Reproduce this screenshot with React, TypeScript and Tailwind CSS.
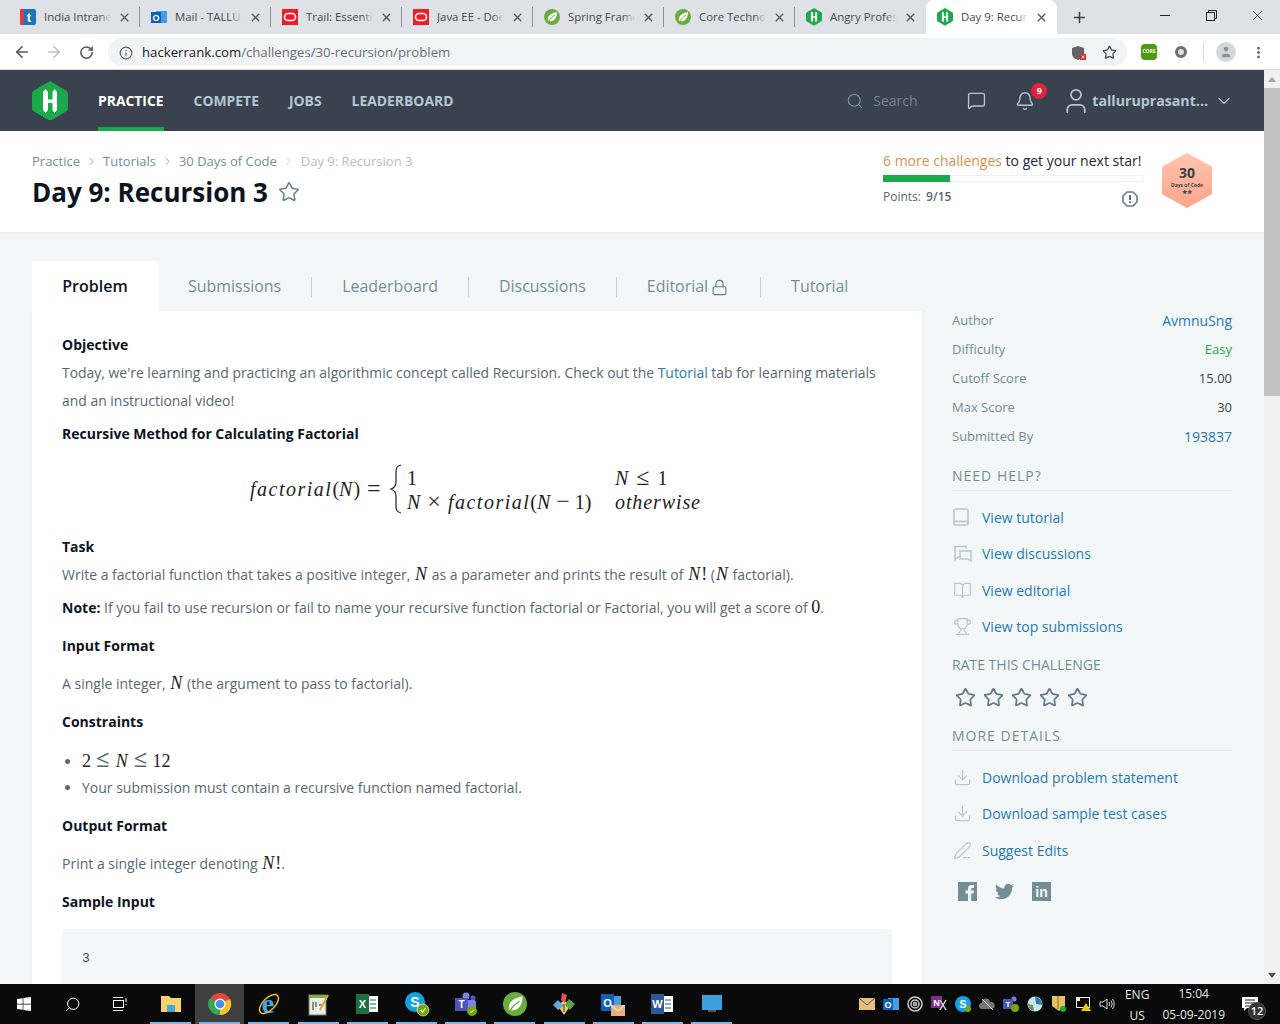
import {
  ArrowLeft,
  ArrowRight,
  Bell,
  BookOpen,
  ChevronDown,
  ChevronRight,
  Download,
  Info,
  Lock,
  MessageSquare,
  MoreVertical,
  PenLine,
  Plus,
  RotateCw,
  Search,
  Star,
  Trophy,
  User,
  X,
} from 'lucide-react';
import { FaTwitter, FaWindows } from 'react-icons/fa';
import type { ReactNode } from 'react';

function HrHex({ size = 16 }: { size?: number }) {
  return (
    <svg width={size} height={size * 1.11} viewBox="0 0 36 40" className="shrink-0">
      <path d="M18 0 L34 9.5 Q36 10.5 36 13 V27 Q36 29.5 34 30.5 L18 40 L2 30.5 Q0 29.5 0 27 V13 Q0 10.5 2 9.5 Z" fill="#1ba94c" />
      <path d="M13.5 8 L16 11 V18.5 H20.5 V11 L22.5 8 L25 11 V29 L22.5 32 L20.5 29 V22 H16 V29 L13.5 32 L11 29 V11 Z" fill="#fff" />
    </svg>
  );
}

function SpringLeaf({ size = 16 }: { size?: number }) {
  return (
    <svg width={size} height={size} viewBox="0 0 16 16" className="shrink-0">
      <circle cx="8" cy="8" r="8" fill="#6aad3d" />
      <path d="M4 12 C3 7 7 4 13 3 C13 9 10 13 5 12 Z" fill="#fff" />
      <path d="M4 13 C6 10 8 8 11 6" stroke="#6aad3d" fill="none" />
    </svg>
  );
}

function OracleIcon() {
  return (
    <svg width="16" height="16" viewBox="0 0 16 16" className="shrink-0">
      <rect width="16" height="16" fill="#ee1c25" />
      <rect x="2.5" y="4.5" width="11" height="7" rx="3.5" fill="none" stroke="#fff" strokeWidth="1.6" />
    </svg>
  );
}

function TeleIcon() {
  return (
    <svg width="16" height="16" viewBox="0 0 16 16" className="shrink-0">
      <rect width="16" height="16" rx="2" fill="#1b76bb" />
      <rect width="4" height="16" rx="1" fill="#e4344f" />
      <text x="9" y="13" fontSize="13" fontWeight="700" textAnchor="middle" fill="#fff" fontFamily="Liberation Sans">t</text>
    </svg>
  );
}

function OutlookIcon({ size = 16 }: { size?: number }) {
  return (
    <svg width={size} height={size} viewBox="0 0 16 16" className="shrink-0">
      <rect x="5" y="2" width="11" height="12" fill="#3fa0e6" />
      <rect x="0" y="3" width="10" height="11" fill="#0f5fb5" />
      <text x="5" y="12" fontSize="9" fontWeight="700" textAnchor="middle" fill="#fff" fontFamily="Liberation Sans">O</text>
    </svg>
  );
}

const tabs: { title: string; icon: ReactNode; active?: boolean }[] = [
  { title: 'India Intranet', icon: <TeleIcon /> },
  { title: 'Mail - TALLURU', icon: <OutlookIcon /> },
  { title: 'Trail: Essentials', icon: <OracleIcon /> },
  { title: 'Java EE - Docs', icon: <OracleIcon /> },
  { title: 'Spring Framework', icon: <SpringLeaf /> },
  { title: 'Core Technologies', icon: <SpringLeaf /> },
  { title: 'Angry Professor', icon: <HrHex size={16} /> },
  { title: 'Day 9: Recursion', icon: <HrHex size={16} />, active: true },
];

function TabStrip() {
  return (
    <div className="flex h-[34px] items-stretch bg-[#dee1e6] pl-[9px] font-['Open_Sans',sans-serif] text-[11.4px]">
      {tabs.map((tab, i) => (
        <div
          key={tab.title}
          className={
            tab.active
              ? 'flex w-[131px] items-center rounded-t-lg bg-white pl-[11px]'
              : 'flex w-[131px] items-center pl-[11px]'
          }
        >
          {tab.icon}
          <div className="relative ml-[8px] w-[67px] shrink-0 overflow-hidden whitespace-nowrap text-[#45494d]">
            {tab.title}
            <div
              className={
                tab.active
                  ? 'absolute inset-y-0 right-0 w-3 bg-gradient-to-r from-transparent to-white'
                  : 'absolute inset-y-0 right-0 w-3 bg-gradient-to-r from-transparent to-[#dee1e6]'
              }
            />
          </div>
          <X size={13} strokeWidth={2.5} className="ml-[7px] shrink-0 text-[#55585c]" />
          {i < 6 && <div className="ml-auto h-[20px] w-px shrink-0 bg-[#8f9296]" />}
        </div>
      ))}
      <div className="ml-[14px] flex items-center">
        <Plus size={17} strokeWidth={2.2} className="text-[#3c4043]" />
      </div>
      <div className="ml-auto flex items-start">
        <div className="flex h-[30px] w-[46px] items-center justify-center">
          <div className="h-px w-[10px] bg-[#222]" />
        </div>
        <div className="flex h-[30px] w-[46px] items-center justify-center">
          <svg width="11" height="11" viewBox="0 0 11 11" fill="none" stroke="#222">
            <rect x="0.5" y="2.5" width="8" height="8" />
            <path d="M2.5 2.5 V0.5 H10.5 V8.5 H8.5" />
          </svg>
        </div>
        <div className="flex h-[30px] w-[46px] items-center justify-center">
          <X size={17} strokeWidth={1} className="text-[#222]" />
        </div>
      </div>
    </div>
  );
}

function Toolbar() {
  return (
    <div className="flex h-[36px] items-center border-b border-[#dadce0] bg-white pt-px font-['Open_Sans',sans-serif]">
      <div className="flex w-[108px] items-center pl-[13px] text-[#55585c]">
        <ArrowLeft size={18} strokeWidth={2.2} />
        <ArrowRight size={18} strokeWidth={2.2} className="ml-[14px] text-[#bdc1c6]" />
        <RotateCw size={15} strokeWidth={2.4} className="ml-[16px]" />
      </div>
      <div className="flex h-[28px] w-[1019px] items-center rounded-full bg-[#f1f3f4] pl-[11px] pr-[10px] pt-px text-[13.2px]">
        <Info size={14} className="text-[#5f6368]" />
        <span className="ml-[9px] text-[#202124]">hackerrank.com</span>
        <span className="text-[#6a7075]">/challenges/30-recursion/problem</span>
        <div className="ml-auto flex items-center gap-[15px]">
          <svg width="15" height="16" viewBox="0 0 15 16">
            <path d="M6 1 L12 3 V8 C12 12 9 14 6 15 C3 14 0 12 0 8 V3 Z" fill="#5f6368" />
            <rect x="8" y="9" width="6" height="6" fill="#d93025" />
            <path d="M9.5 10.5 L12.5 13.5 M12.5 10.5 L9.5 13.5" stroke="#fff" strokeWidth="0.8" />
          </svg>
          <Star size={15} strokeWidth={2} className="text-[#45494d]" />
        </div>
      </div>
      <div className="ml-[14px] flex h-[16px] w-[16px] items-center justify-center rounded-sm bg-[#4f9a0f]">
        <span className="text-[5px] font-bold text-white">CORS</span>
      </div>
      <div className="ml-[18px] h-[12px] w-[12px] rounded-full border-[3px] border-[#6e6e6e] bg-[#ddd]" />
      <div className="ml-[16px] h-[18px] w-px bg-[#dadce0]" />
      <div className="ml-[12px] flex h-[20px] w-[20px] items-center justify-center rounded-full bg-[#d5d7da]">
        <User size={14} fill="#8f9296" strokeWidth={0} />
      </div>
      <MoreVertical size={15} strokeWidth={2.5} className="ml-[15px] text-[#5f6368]" />
    </div>
  );
}

function NavBar() {
  const items = ['PRACTICE', 'COMPETE', 'JOBS', 'LEADERBOARD'];
  return (
    <div className="flex h-[61px] items-stretch bg-[#39424e] pl-8 pr-[30px] text-[13.9px] font-bold text-[#b3c7d2]">
      <div className="flex items-center">
        <HrHex size={36} />
      </div>
      <div className="ml-[30px] flex items-stretch gap-[30px]">
        {items.map((item, i) => (
          <div
            key={item}
            className={
              i === 0
                ? 'flex items-center border-b-4 border-[#1ba94c] pt-[5px] text-white'
                : 'flex items-center border-b-4 border-transparent pt-[5px]'
            }
          >
            {item}
          </div>
        ))}
      </div>
      <div className="ml-auto flex items-center font-normal">
        <Search size={18} strokeWidth={1.4} className="text-[#7f9aa5]" />
        <span className="ml-[9px] w-[94px] text-[14px] text-[#6f8791]">Search</span>
        <MessageSquare size={19} strokeWidth={1.7} />
        <div className="relative ml-[29px] flex">
          <Bell size={20} strokeWidth={1.7} />
          <div className="absolute -top-[8px] left-[16px] flex h-[16px] w-[16px] items-center justify-center rounded-full bg-[#e0243e] text-[9px] font-bold text-white">
            9
          </div>
        </div>
        <User size={30} strokeWidth={1.4} className="ml-[26px]" />
        <span className="ml-px text-[14.2px] font-bold">talluruprasant...</span>
        <ChevronDown size={20} strokeWidth={1.3} className="ml-[6px]" />
      </div>
    </div>
  );
}

function PageHeader() {
  return (
    <div className="flex h-[101px] bg-white pl-8 pr-[52px] shadow-[0_1px_3px_rgba(0,0,0,0.05)]">
      <div>
        <div className="mt-[21px] flex items-center text-[13px] leading-[18px] text-[#738f93]">
          <span>Practice</span>
          <ChevronRight size={13} strokeWidth={1.4} className="mx-[5px]" />
          <span>Tutorials</span>
          <ChevronRight size={13} strokeWidth={1.4} className="mx-[5px]" />
          <span>30 Days of Code</span>
          <ChevronRight size={13} strokeWidth={1.4} className="ml-[5px] mr-[6px] text-[#b4c2c5]" />
          <span className="text-[#b0bfc2]">Day 9: Recursion 3</span>
        </div>
        <div className="mt-[3px] flex items-center">
          <h1 className="text-[26px] font-bold leading-[38px] text-[#0e141e]">Day 9: Recursion 3</h1>
          <Star size={22} strokeWidth={1.6} className="ml-[10px] text-[#5f7d8c]" />
        </div>
      </div>
      <div className="ml-auto flex">
        <div className="mt-[20px] w-[260px]">
          <div className="text-[14px] leading-[20px] text-[#1c2733]">
            <span className="text-[#d8914f]">6 more challenges</span> to get your next star!
          </div>
          <div className="mt-[4px] h-[7px] border border-[#f0f0f0]">
            <div className="-m-px h-[7px] w-[67px] bg-[#1ba94c]" />
          </div>
          <div className="mt-[5px] flex items-center justify-between pr-[5px] text-[12px] text-[#576871]">
            <span>
              Points: <b className="ml-[2px] font-semibold">9/15</b>
            </span>
            <svg width="16" height="16" viewBox="0 0 16 16" className="mt-[4px]" fill="none">
              <path d="M5 1 H11 L15 5 V11 L11 15 H5 L1 11 V5 Z" stroke="#5f7d8c" strokeWidth="1.6" strokeLinejoin="round" />
              <path d="M8 4 V9 M8 10.5 V12" stroke="#39424e" strokeWidth="1.6" />
            </svg>
          </div>
        </div>
        <div className="ml-[19px] mt-[22px] flex h-[55px] w-[50px] flex-col items-center justify-center bg-gradient-to-b from-[#ffc4ab] to-[#ffa58c] [clip-path:polygon(50%_0,100%_25%,100%_75%,50%_100%,0_75%,0_25%)]">
          <span className="text-[14px] font-bold leading-[16px] text-[#39424e]">30</span>
          <span className="text-[5px] font-bold leading-[8px] text-[#39424e]">Days of Code</span>
          <span className="text-[6px] font-bold leading-[7px] text-[#39424e]">★★</span>
        </div>
      </div>
    </div>
  );
}

function ProblemTabs() {
  const tabNames = ['Submissions', 'Leaderboard', 'Discussions', 'Editorial', 'Tutorial'];
  return (
    <div className="flex h-[50px] items-stretch text-[15.95px] text-[#738f93]">
      <div className="flex w-[127px] items-center justify-center bg-white pr-px text-[16px] font-semibold text-[#0e141e]">Problem</div>
      <div className="-ml-px flex items-stretch pt-[2px]">
        {tabNames.map((name, i) => (
          <div key={name} className="flex items-center">
            <div className={i < 4 ? 'flex h-[20px] items-center border-r border-[#c2d0d3] px-[30px]' : 'flex h-[20px] items-center px-[30px]'}>
              {name}
              {name === 'Editorial' && <Lock size={17} strokeWidth={1.6} className="ml-[3px] mr-[2px] text-[#5f7d8c]" />}
            </div>
          </div>
        ))}
      </div>
    </div>
  );
}

function M({ children }: { children: ReactNode }) {
  return <i className="ml-px mr-px font-['Liberation_Serif',serif] text-[18px] leading-none text-[#222]">{children}</i>;
}

function Mn({ children }: { children: ReactNode }) {
  return <span className="font-['Liberation_Serif',serif] text-[18px] leading-none text-[#222]">{children}</span>;
}

function Op({ children, className = 'mx-[5px]' }: { children: ReactNode; className?: string }) {
  return <span className={`${className} text-[24px] leading-none`}>{children}</span>;
}

function Heading({ children, className = 'mt-[10px]' }: { children: ReactNode; className?: string }) {
  return <h3 className={`${className} text-[14px] font-bold leading-7 text-[#0e141e]`}>{children}</h3>;
}

function Formula() {
  return (
    <div className="flex h-[85px] items-center pb-[4px] pl-[188px] font-['Liberation_Serif',serif] text-[20px] leading-[24px] text-[#222]">
      <span className="w-[133px] whitespace-nowrap">
        <i className="tracking-[1.5px]">factorial</i>(<i className="tracking-[1px]">N</i>)
        <Op className="ml-[7px]">=</Op>
      </span>
      <svg width="14" height="50" viewBox="0 0 14 50" fill="none" stroke="#222" strokeWidth="1.2" className="ml-[6px]">
        <path d="M12 1 C7 2 7 5 7 9 V18 C7 22 5 24 2 25 C5 26 7 28 7 32 V41 C7 45 7 48 12 49" />
      </svg>
      <div className="ml-[4px] grid grid-cols-[208px_auto] grid-rows-[24px_24px] items-baseline whitespace-nowrap">
        <span>1</span>
        <span>
          <i>N</i>
          <Op className="mx-[8px]">≤</Op>1
        </span>
        <span>
          <i>N</i>
          <Op className="mx-[7px]">×</Op>
          <i className="tracking-[1.5px]">factorial</i>(<i className="tracking-[1px]">N</i>
          <Op className="mx-[5px]">−</Op>1)
        </span>
        <i className="tracking-[0.9px]">otherwise</i>
      </div>
    </div>
  );
}

function ProblemCard() {
  return (
    <div className="h-[700px] bg-white px-[30px] pt-[20px] text-[14px] leading-7 text-[#576871] shadow-[0_1px_4px_rgba(0,0,0,0.08)]">
      <Heading className="">Objective</Heading>
      <p className="text-[13.95px]">
        Today, we're learning and practicing an algorithmic concept called Recursion. Check out the{' '}
        <span className="text-[#1f7ab8]">Tutorial</span> tab for learning materials and an instructional video!
      </p>
      <Heading className="mt-[5px]">Recursive Method for Calculating Factorial</Heading>
      <Formula />
      <Heading className="">Task</Heading>
      <p>
        Write a factorial function that takes a positive integer, <M>N</M> as a parameter and prints the result of{' '}
        <M>N</M>
        <Mn>!</Mn> (<M>N</M> factorial).
      </p>
      <p className="mt-[5px]">
        <b className="font-bold text-[#0e141e]">Note:</b> If you fail to use recursion or fail to name your recursive
        function factorial or Factorial, you will get a score of <Mn>0</Mn>.
      </p>
      <Heading>Input Format</Heading>
      <p className="mt-[10px]">
        A single integer, <M>N</M> (the argument to pass to factorial).
      </p>
      <Heading>Constraints</Heading>
      <ul className="mt-[10px] list-disc pl-5">
        <li className="h-7 leading-[26px]">
          <Mn>2</Mn>
          <Op>≤</Op>
          <M>N</M>
          <Op>≤</Op>
          <Mn>12</Mn>
        </li>
        <li>Your submission must contain a recursive function named factorial.</li>
      </ul>
      <Heading>Output Format</Heading>
      <p className="mt-[10px]">
        Print a single integer denoting <M>N</M>
        <Mn>!</Mn>.
      </p>
      <Heading>Sample Input</Heading>
      <div className="mt-[13px] h-[80px] bg-[#f3f7f7] px-5 pt-4 font-['Liberation_Mono',monospace] text-[13px] text-[#39424e]">3</div>
    </div>
  );
}

const stats = [
  { label: 'Author', value: 'AvmnuSng', color: 'text-[14px] text-[#1f7ab8]' },
  { label: 'Difficulty', value: 'Easy', color: 'text-[13px] text-[#1ba94c]' },
  { label: 'Cutoff Score', value: '15.00', color: 'text-[13px] text-[#39424e]' },
  { label: 'Max Score', value: '30', color: 'text-[13px] text-[#39424e]' },
  { label: 'Submitted By', value: '193837', color: 'text-[14px] text-[#1f7ab8]' },
];

function TwoChat() {
  return (
    <svg width="20" height="18" viewBox="0 0 20 18" fill="none" stroke="#b9c8cc" strokeWidth="1.5">
      <path d="M13 3 V1.5 H2 V15 L5 12 H7" />
      <path d="M7 6 H18 V16 L15 14 H7 Z" />
    </svg>
  );
}

function BookIcon() {
  return (
    <svg width="16" height="18" viewBox="0 0 16 18" fill="none" stroke="#b9c8cc" strokeWidth="1.6">
      <rect x="1" y="1" width="14" height="16" rx="1.5" />
      <path d="M1 13.5 H15" />
    </svg>
  );
}

function SquareLogo({ children }: { children: ReactNode }) {
  return (
    <svg width="19" height="19" viewBox="0 0 19 19" className="shrink-0">
      <rect width="19" height="19" fill="#738f93" />
      {children}
    </svg>
  );
}

function SideLink({ icon, label }: { icon: ReactNode; label: string }) {
  return (
    <div className="flex h-[36.5px] items-center">
      <div className="flex w-[30px] items-center pl-px text-[#b9c8cc]">{icon}</div>
      <span className="text-[14px] text-[#1f7ab8]">{label}</span>
    </div>
  );
}

function Sidebar() {
  return (
    <div className="w-[280px]">
      <div className="-mt-[5px] pt-[50px]">
        {stats.map((s) => (
          <div key={s.label} className="flex h-[29px] items-center justify-between text-[13px] text-[#738f93]">
            <span>{s.label}</span>
            <span className={s.color}>{s.value}</span>
          </div>
        ))}
      </div>
      <div className="mt-[15px] border-b border-[#e6ebec] pb-[4px] text-[14px] leading-[20px] tracking-[1px] text-[#738f93]">
        NEED HELP?
      </div>
      <div className="mt-[8px]">
        <SideLink icon={<BookIcon />} label="View tutorial" />
        <SideLink icon={<TwoChat />} label="View discussions" />
        <SideLink icon={<BookOpen size={19} strokeWidth={1.5} />} label="View editorial" />
        <SideLink icon={<Trophy size={19} strokeWidth={1.5} />} label="View top submissions" />
      </div>
      <div className="mt-[10px] text-[14px] leading-[20px] text-[#738f93]">RATE THIS CHALLENGE</div>
      <div className="mt-[12px] flex gap-[7px] pl-[3px] text-[#5f7d8c]">
        {[1, 2, 3, 4, 5].map((n) => (
          <Star key={n} size={21} strokeWidth={2} />
        ))}
      </div>
      <div className="mt-[18px] border-b border-[#e6ebec] pb-[4px] text-[14px] leading-[20px] tracking-[1px] text-[#738f93]">
        MORE DETAILS
      </div>
      <div className="mt-[8px]">
        <SideLink icon={<Download size={19} strokeWidth={1.5} />} label="Download problem statement" />
        <SideLink icon={<Download size={19} strokeWidth={1.5} />} label="Download sample test cases" />
        <SideLink icon={<PenLine size={19} strokeWidth={1.5} />} label="Suggest Edits" />
      </div>
      <div className="mt-[13px] flex items-center gap-[18px] pl-[6px] text-[#738f93]">
        <SquareLogo>
          <path d="M10 19 V11.5 H7.5 V8.5 H10 V6.5 C10 4 11.5 3 13.5 3 H16 V6 H14.5 C13.5 6 13.2 6.5 13.2 7.2 V8.5 H16 L15.5 11.5 H13.2 V19 Z" fill="#f3f7f7" />
        </SquareLogo>
        <FaTwitter size={19} />
        <SquareLogo>
          <text x="9.5" y="15" fontSize="14" fontWeight="700" textAnchor="middle" fill="#f3f7f7" fontFamily="Liberation Sans">in</text>
        </SquareLogo>
      </div>
    </div>
  );
}

function Scrollbar() {
  return (
    <div className="flex w-4 shrink-0 flex-col items-center bg-[#f1f1f1]">
      <div className="flex h-[18px] items-center">
        <div className="h-0 w-0 border-x-[4px] border-b-[5px] border-x-transparent border-b-[#a3a3a3]" />
      </div>
      <div className="h-[308px] w-full bg-[#c1c1c1]" />
      <div className="flex-1" />
      <div className="flex h-[18px] items-center">
        <div className="h-0 w-0 border-x-[4px] border-t-[5px] border-x-transparent border-t-[#505050]" />
      </div>
    </div>
  );
}

function TaskApp({ children, active }: { children: ReactNode; active?: boolean }) {
  return (
    <div className={active ? 'flex h-10 w-[49.2px] flex-col items-center bg-[#3f3f3f]' : 'flex h-10 w-[49.2px] flex-col items-center'}>
      <div className="flex flex-1 items-center justify-center pt-[2px]">{children}</div>
      <div className="h-[2px] w-[41px] bg-[#76b9ed]" />
    </div>
  );
}

function TextTile({ bg, letter }: { bg: string; letter: string }) {
  return (
    <svg width="24" height="24" viewBox="0 0 24 24">
      <rect x="10" y="4" width="13" height="16" fill="#fff" />
      <rect x="1" y="2" width="13" height="20" fill={bg} />
      <text x="7.5" y="16" fontSize="11" fontWeight="700" textAnchor="middle" fill="#fff" fontFamily="Liberation Sans">
        {letter}
      </text>
      <path d="M15 8 H21 M15 12 H21 M15 16 H21" stroke={bg} strokeWidth="1.2" />
    </svg>
  );
}

function Taskbar() {
  return (
    <div className="flex h-10 items-stretch bg-[#0a0a0a] font-['Open_Sans',sans-serif] text-white">
      <div className="flex w-12 items-center justify-center">
        <FaWindows size={16} />
      </div>
      <div className="flex w-12 items-center justify-center">
        <Search size={17} strokeWidth={1.4} className="-scale-x-100" />
      </div>
      <div className="flex w-12 items-center justify-center">
        <svg width="16" height="16" viewBox="0 0 16 16" fill="none" stroke="#fff">
          <rect x="1.5" y="4.5" width="10" height="7" />
          <path d="M1 1.5 H11 M1 14.5 H11 M14 2 V6 M14 8 V9" />
        </svg>
      </div>
      <div className="ml-[2px] flex">
        <TaskApp>
          <svg width="22" height="22" viewBox="0 0 22 22">
            <path d="M1 3 H9 L11 5 H21 V19 H1 Z" fill="#f6d469" />
            <rect x="7" y="12" width="8" height="7" fill="#3fa9e0" />
          </svg>
        </TaskApp>
        <TaskApp active>
          <svg width="24" height="24" viewBox="0 0 24 24">
            <circle cx="12" cy="12" r="11" fill="#e2483b" />
            <path d="M12 12 L2 6 A11 11 0 0 0 12 23 Z" fill="#34a853" />
            <path d="M12 12 L12 23 A11 11 0 0 0 22 7 Z" fill="#fbc02d" />
            <circle cx="12" cy="12" r="5.5" fill="#fff" />
            <circle cx="12" cy="12" r="4.3" fill="#4a8bf0" />
          </svg>
        </TaskApp>
        <TaskApp>
          <svg width="26" height="26" viewBox="0 0 26 26">
            <text x="12" y="22" fontSize="28" fontWeight="700" textAnchor="middle" fill="#3fa9e8" fontFamily="Liberation Serif">e</text>
            <ellipse cx="13" cy="13" rx="12" ry="6" fill="none" stroke="#f0b429" strokeWidth="1.5" transform="rotate(-45 13 13)" />
          </svg>
        </TaskApp>
        <TaskApp>
          <svg width="24" height="24" viewBox="0 0 24 24">
            <rect x="3" y="3" width="17" height="20" fill="#e6efe0" stroke="#777" />
            <rect x="3" y="3" width="17" height="3" fill="#7cae4e" />
            <path d="M7 10 V18 M10 10 V15 M13 13 H16" stroke="#333" />
            <path d="M14 18 L22 3" stroke="#e2a93b" strokeWidth="2" />
          </svg>
        </TaskApp>
        <TaskApp>
          <TextTile bg="#1d6f42" letter="X" />
        </TaskApp>
        <TaskApp>
          <svg width="26" height="26" viewBox="0 0 26 26">
            <circle cx="11" cy="11" r="10" fill="#14a3e2" />
            <text x="11" y="16" fontSize="14" fontWeight="700" textAnchor="middle" fill="#fff" fontFamily="Liberation Sans">S</text>
            <circle cx="19" cy="19" r="6" fill="#74a80d" stroke="#fff" strokeWidth="0.6" />
            <path d="M16.5 19 L18.5 21 L21.5 17" stroke="#fff" fill="none" strokeWidth="1.2" />
          </svg>
        </TaskApp>
        <TaskApp>
          <svg width="26" height="26" viewBox="0 0 26 26">
            <circle cx="13" cy="5" r="3.5" fill="#7b83eb" />
            <circle cx="20" cy="7" r="2.5" fill="#5059c9" />
            <rect x="9" y="9" width="14" height="10" rx="2" fill="#7b83eb" />
            <rect x="2" y="7" width="13" height="13" fill="#4b53bc" />
            <text x="8.5" y="17" fontSize="10" fontWeight="700" textAnchor="middle" fill="#fff" fontFamily="Liberation Sans">T</text>
            <circle cx="19" cy="20" r="5" fill="#74a80d" />
            <path d="M17 20 L18.5 21.5 L21 18.5" stroke="#fff" fill="none" />
          </svg>
        </TaskApp>
        <TaskApp>
          <SpringLeaf size={24} />
        </TaskApp>
        <TaskApp>
          <svg width="24" height="24" viewBox="0 0 24 24">
            <path d="M12 8 L18 14 L12 23 L6 14 Z" fill="#f2cf63" />
            <path d="M6 8 L12 14 L6 18 L1 13 Z" fill="#6fa3e0" />
            <path d="M17 7 L23 12 L18 18 L13 13 Z" fill="#5da34b" />
            <path d="M10 1 L15 3 L13 11 L9 8 Z" fill="#e2574c" />
            <path d="M12 12 V20" stroke="#333" />
          </svg>
        </TaskApp>
        <TaskApp>
          <svg width="28" height="26" viewBox="0 0 28 26">
            <rect x="8" y="5" width="14" height="12" fill="#3fa0e6" />
            <rect x="2" y="3" width="13" height="17" fill="#0f5fb5" />
            <text x="8.5" y="16" fontSize="11" fontWeight="700" textAnchor="middle" fill="#fff" fontFamily="Liberation Sans">O</text>
            <rect x="12" y="14" width="14" height="11" fill="#e7b078" />
            <path d="M12 14 L19 20 L26 14" fill="none" stroke="#fff" />
          </svg>
        </TaskApp>
        <TaskApp>
          <TextTile bg="#2b5797" letter="W" />
        </TaskApp>
        <TaskApp>
          <svg width="24" height="24" viewBox="0 0 24 24">
            <rect x="2" y="3" width="20" height="15" fill="#3f9fdc" />
            <rect x="8" y="18" width="8" height="2" fill="#555" />
          </svg>
        </TaskApp>
      </div>
      <div className="ml-auto flex items-center pr-[9px]">
        <div className="flex items-center gap-[8px]">
          <svg width="16" height="12" viewBox="0 0 16 12">
            <rect width="16" height="12" fill="#e7bd7c" />
            <path d="M0 0 L8 7 L16 0" fill="none" stroke="#555" />
          </svg>
          <OutlookIcon />
          <svg width="16" height="16" viewBox="0 0 16 16" fill="none" stroke="#ccc" strokeWidth="1.5">
            <circle cx="8" cy="8" r="7" />
            <circle cx="8" cy="8" r="4" />
            <circle cx="8" cy="8" r="1.5" />
          </svg>
          <svg width="16" height="16" viewBox="0 0 16 16">
            <rect width="11" height="12" fill="#7b2f86" />
            <text x="5.5" y="10" fontSize="9" fontWeight="700" textAnchor="middle" fill="#fff" fontFamily="Liberation Sans">N</text>
            <path d="M9 4 L15 14 M15 4 L9 14" stroke="#ddd" strokeWidth="1.4" />
          </svg>
          <svg width="16" height="16" viewBox="0 0 16 16">
            <circle cx="8" cy="8" r="8" fill="#14a3e2" />
            <text x="8" y="12" fontSize="11" fontWeight="700" textAnchor="middle" fill="#fff" fontFamily="Liberation Sans">S</text>
            <circle cx="13" cy="13" r="3" fill="#74a80d" />
          </svg>
          <svg width="16" height="14" viewBox="0 0 16 14">
            <path d="M3 12 A3 3 0 0 1 3 6 A4 4 0 0 1 11 5 A3.5 3.5 0 0 1 13 12 Z" fill="#777" />
            <path d="M3 2 L14 13" stroke="#ddd" />
          </svg>
          <svg width="16" height="16" viewBox="0 0 16 16">
            <circle cx="11" cy="3" r="2.5" fill="#7b83eb" />
            <rect width="10" height="10" y="3" fill="#4b53bc" />
            <text x="5" y="11" fontSize="8" fontWeight="700" textAnchor="middle" fill="#fff" fontFamily="Liberation Sans">T</text>
            <circle cx="12" cy="12" r="4" fill="#74a80d" />
          </svg>
          <svg width="16" height="16" viewBox="0 0 16 16">
            <circle cx="8" cy="8" r="7.5" fill="#cfe3e8" />
            <path d="M8 1 A7 7 0 0 1 15 9 L9 8 Z" fill="#2f7fb5" />
            <path d="M1 8 A7 7 0 0 0 7 15 L6 9 Z" fill="#6a9a5a" />
          </svg>
          <svg width="16" height="16" viewBox="0 0 16 16">
            <path d="M1 0 H14 V10 L8 15 L1 10 Z" fill="#e5c261" />
            <path d="M7 0 V13" stroke="#8a6d1f" />
            <circle cx="12" cy="13" r="3" fill="#1db32b" />
          </svg>
          <svg width="16" height="16" viewBox="0 0 16 16">
            <rect x="1.5" y="1.5" width="13" height="10" fill="none" stroke="#eee" />
            <rect x="1" y="1" width="4" height="4" fill="#eee" />
            <path d="M11 7 L16 15 H6 Z" fill="#f6c500" />
          </svg>
          <svg width="16" height="16" viewBox="0 0 16 16" fill="none" stroke="#ddd">
            <path d="M1 6 H4 L8 3 V13 L4 10 H1 Z" />
            <path d="M10 6 Q11.5 8 10 10 M12 4.5 Q14.5 8 12 11.5 M13.5 3 Q17 8 13.5 13" />
          </svg>
        </div>
        <div className="ml-[10px] flex flex-col items-center pt-[1px] text-[12px] leading-[21px] text-[#e8e8e8]">
          <span>ENG</span>
          <span>US</span>
        </div>
        <div className="ml-[13px] flex flex-col items-center text-[12px] leading-[21px] text-[#e8e8e8]">
          <span>15:04</span>
          <span>05-09-2019</span>
        </div>
        <div className="relative ml-[17px] mr-[3px] flex h-10 w-[26px] items-center">
          <svg width="17" height="15" viewBox="0 0 17 15">
            <path d="M0 0 H16 V11 H5 L2 14 V11 H0 Z" fill="#fff" />
            <path d="M3 3 H13 M3 6 H13 M3 9 H9" stroke="#222" />
          </svg>
          <div className="absolute bottom-[4px] left-[6px] flex h-[18px] w-[18px] items-center justify-center rounded-full border border-[#555] bg-[#333] text-[11px] font-semibold text-white">
            12
          </div>
        </div>
      </div>
    </div>
  );
}

export default function App() {
  return (
    <div className="flex h-screen flex-col overflow-hidden bg-white font-['Open_Sans',sans-serif]">
      <TabStrip />
      <Toolbar />
      <div className="flex min-h-0 flex-1">
        <div className="min-w-0 flex-1 overflow-hidden bg-[#f3f7f7]">
          <NavBar />
          <PageHeader />
          <div className="flex items-start gap-[30px] pl-8 pt-[29px]">
            <div className="w-[890px]">
              <ProblemTabs />
              <ProblemCard />
            </div>
            <Sidebar />
          </div>
        </div>
        <Scrollbar />
      </div>
      <Taskbar />
    </div>
  );
}
